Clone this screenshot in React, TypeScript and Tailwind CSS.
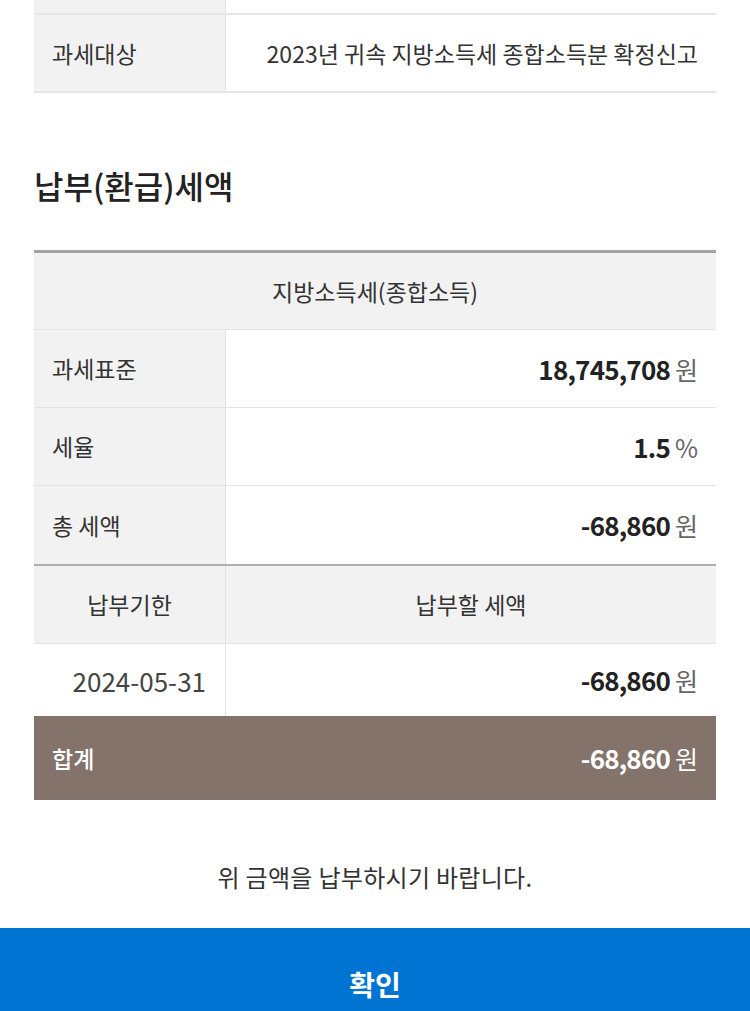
const FONT = "font-['Noto_Sans_CJK_KR','Noto_Sans',sans-serif]";

function Won({ amount, unit = "원" }: { amount: string; unit?: string }) {
  return (
    <span className="flex items-baseline gap-[5px]">
      <span className="text-[26px] font-bold tracking-[-0.8px] text-[#222]">{amount}</span>
      <span className="text-[25px] font-normal text-[#666]">{unit}</span>
    </span>
  );
}

function Row({ label, children }: { label: string; children: React.ReactNode }) {
  return (
    <div className="grid h-[78px] grid-cols-[192px_1fr] border-b border-[#e3e3e3]">
      <div className="flex items-center border-r border-[#e3e3e3] bg-[#f2f2f2] pl-[18px] text-[23px] text-[#333]">
        {label}
      </div>
      <div className="flex items-center justify-end pr-[18px]">{children}</div>
    </div>
  );
}

export default function App() {
  return (
    <div className={`w-[750px] bg-white ${FONT}`}>
      <div className="px-[34px]">
        {/* 위쪽 표 (잘린 윗 행 + 과세대상) */}
        <div className="grid h-[15px] grid-cols-[192px_1fr] border-b-2 border-[#e6e6e6]">
          <div className="border-r border-[#e3e3e3] bg-[#f2f2f2]" />
          <div />
        </div>
        <div className="grid h-[78px] grid-cols-[192px_1fr] border-b-2 border-[#e6e6e6]">
          <div className="flex items-center border-r border-[#e3e3e3] bg-[#f2f2f2] pl-[18px] text-[23px] text-[#333]">
            과세대상
          </div>
          <div className="flex items-center justify-end pr-[18px] text-[23px] text-[#333]">
            2023년 귀속 지방소득세 종합소득분 확정신고
          </div>
        </div>

        <h2 className="pt-[72px] pb-[45px] text-[32px] leading-[40px] font-medium text-[#222]">
          납부(환급)세액
        </h2>

        {/* 납부세액 표 */}
        <div className="border-t-[3px] border-[#a3a3a3]">
          <div className="flex h-[77px] items-center justify-center border-b border-[#e3e3e3] bg-[#f2f2f2] text-[23px] text-[#333]">
            지방소득세(종합소득)
          </div>
          <Row label="과세표준">
            <Won amount="18,745,708" />
          </Row>
          <Row label="세율">
            <Won amount="1.5" unit="%" />
          </Row>
          <div className="grid h-[78px] grid-cols-[192px_1fr]">
            <div className="flex items-center border-r border-[#e3e3e3] bg-[#f2f2f2] pl-[18px] text-[23px] text-[#333]">
              총 세액
            </div>
            <div className="flex items-center justify-end pr-[18px]">
              <Won amount="-68,860" />
            </div>
          </div>

          <div className="grid h-[80px] grid-cols-[192px_1fr] border-t-2 border-b border-t-[#b0b0b0] border-b-[#e3e3e3] bg-[#f2f2f2] text-[23px] text-[#333]">
            <div className="flex items-center justify-center border-r border-[#e3e3e3]">납부기한</div>
            <div className="flex items-center justify-center">납부할 세액</div>
          </div>
          <div className="grid h-[72px] grid-cols-[192px_1fr]">
            <div className="flex items-center justify-end border-r border-[#e3e3e3] pr-[19px] text-[26px] text-[#444]">
              2024-05-31
            </div>
            <div className="flex items-center justify-end pr-[18px]">
              <Won amount="-68,860" />
            </div>
          </div>
          <div className="flex h-[84px] items-center justify-between bg-[#84736a] pl-[18px] pr-[18px] text-white">
            <span className="text-[23px] font-medium">합계</span>
            <span className="flex items-baseline gap-[5px]">
              <span className="text-[26px] font-bold tracking-[-0.8px]">-68,860</span>
              <span className="text-[25px]">원</span>
            </span>
          </div>
        </div>
      </div>

      <p className="flex h-[128px] items-center justify-center pt-[26px] text-[24px] tracking-[0.3px] text-[#333]">
        위 금액을 납부하시기 바랍니다.
      </p>

      <button className="flex h-[90px] w-full items-start justify-center bg-[#0074d3] pt-[35px] text-[28px] font-bold text-white">
        확인
      </button>
    </div>
  );
}
